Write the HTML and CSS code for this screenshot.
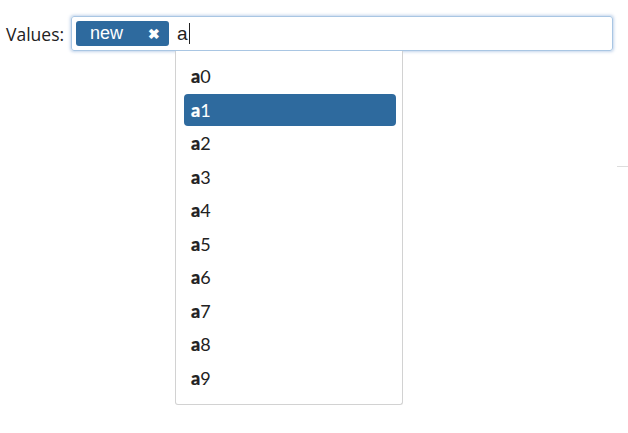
FILE: index.html
```html
<!DOCTYPE html>
<html>
<head>
<meta charset="utf-8">
<link rel="stylesheet" href="styles.css">
</head>
<body>
<div class="field">
  <label class="label">Values:</label>
  <div class="combo">
    <div class="input">
      <span class="tag"><span class="tag-text">new</span><span class="tag-x">✖</span></span>
      <span class="typed">a</span><span class="caret"></span>
    </div>
    <ul class="menu">
      <li class="item"><span class="hl">a</span>0</li>
      <li class="item active"><span class="hl">a</span>1</li>
      <li class="item"><span class="hl">a</span>2</li>
      <li class="item"><span class="hl">a</span>3</li>
      <li class="item"><span class="hl">a</span>4</li>
      <li class="item"><span class="hl">a</span>5</li>
      <li class="item"><span class="hl">a</span>6</li>
      <li class="item"><span class="hl">a</span>7</li>
      <li class="item"><span class="hl">a</span>8</li>
      <li class="item"><span class="hl">a</span>9</li>
    </ul>
  </div>
</div>
<div class="stray"></div>
</body>
</html>
```
FILE: styles.css
```css
html, body { margin: 0; padding: 0; background: #fff; }
body { width: 628px; height: 433px; position: relative; overflow: hidden; font-family: "Open Sans", sans-serif; color: #222; }
.field { display: flex; align-items: flex-start; padding: 16px 0 0 6px; }
.label { width: 60px; font-size: 17.5px; line-height: 37px; margin-right: 5px; font-family: "Open Sans", sans-serif; color: #222; white-space: nowrap; }
.combo { position: relative; }
.input {
  width: 536px; height: 33px; border: 1px solid #a9c6e3; border-radius: 3px;
  box-shadow: 0 0 3px 1px rgba(120,160,210,0.45);
  display: flex; align-items: center; padding-left: 4px; box-sizing: content-box;
}
.tag {
  display: flex; align-items: center; justify-content: space-between;
  width: 93px; height: 25px; box-sizing: border-box; padding: 0 9px 0 14px;
  background: #2e6a9e; border-radius: 3px; color: #fff;
  font-family: "Liberation Sans", Arial, sans-serif; font-size: 18px;
}
.tag-x { font-size: 14px; font-weight: bold; }
.typed { margin-left: 8px; font-family: "Liberation Sans", Arial, sans-serif; font-size: 19px; color: #222; }
.caret { width: 1px; height: 21px; background: #222; margin-left: 1px; }
.menu {
  position: absolute; left: 104px; top: 35px; width: 228px; height: 354px;
  box-sizing: border-box; margin: 0; padding: 8px 6px 0 8px; list-style: none;
  border: 1px solid #d2d2d2; border-top: none; border-radius: 0 0 3px 3px; background: #fff;
  font-family: Lato, sans-serif; font-size: 18px; color: #222;
}
.item { height: 33.5px; line-height: 34.5px; padding-left: 7px; border-radius: 4px; }
.hl { font-weight: 900; -webkit-text-stroke: 0.2px currentColor; }
.item.active { background: #2e6a9e; color: #fff; height: 32px; line-height: 32px; margin: 1px 0 0.5px; }
.stray { position: absolute; left: 617px; top: 166px; width: 11px; height: 1px; background: #ddd; }
```
